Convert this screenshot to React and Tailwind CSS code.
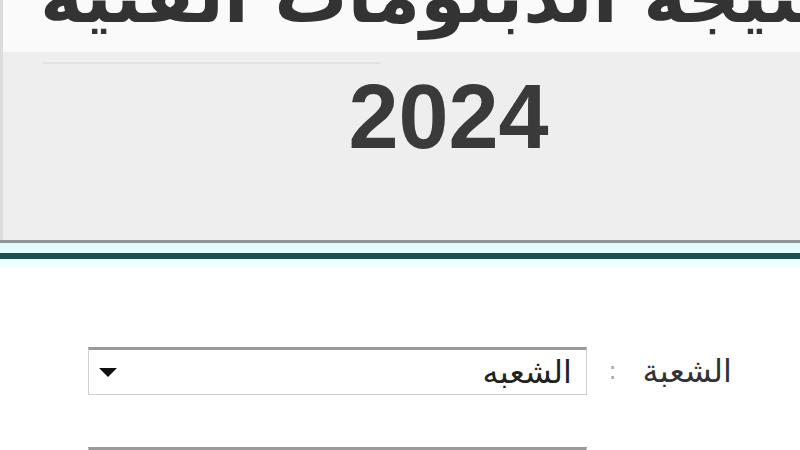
export default function App() {
  return (
    <div className="w-[800px] h-[450px] overflow-hidden bg-white font-['DejaVu_Sans',sans-serif]">
      {/* رأس الصفحة */}
      <header className="h-[240px] bg-[#eeeeee] border-l-[3px] border-[#dcdcdc] flex flex-col overflow-hidden">
        <div className="h-[52px] bg-[#fafafa] relative overflow-visible">
          <div
            dir="rtl"
            className="absolute left-[37px] bottom-[19px] whitespace-nowrap text-[#333] font-bold text-[73px] leading-none"
          >
            نتيجة الدبلومات الفنية
          </div>
        </div>
        <div className="h-[2px] bg-[#e2e2e2] ml-[40px] mr-[420px] mt-[10px]" />
        <div className="flex justify-center pl-[94px] mt-[8px]">
          <span className="font-['Liberation_Sans',sans-serif] font-bold text-[90px] leading-none text-[#3a3a3a]">
            2024
          </span>
        </div>
      </header>

      {/* الخط الفاصل */}
      <div className="h-[3px] bg-[#8c9696]" />
      <div className="h-[10px] bg-[#e2fbfb]" />
      <div className="h-[6px] bg-[#1e4d53]" />
      <div className="h-[8px] bg-[#eefdfd]" />

      {/* النموذج */}
      <div dir="rtl" className="pt-[80px] flex flex-col gap-[52px]">
        <div className="flex items-center">
          <label className="w-[213px] pr-[68px] flex items-center gap-[26px] text-[32px] text-[#333]">
            <span>الشعبة</span>
            <span className="text-[#aaa] text-[24px]">:</span>
          </label>
          <div className="w-[499px] h-[48px] border border-[#cfcfcf] border-t-[3px] border-t-[#9a9a9a] bg-white flex items-center justify-between pr-[14px] pl-[10px]">
            <span className="text-[32px] text-[#222] leading-none">الشعبه</span>
            <svg width="18" height="9" viewBox="0 0 18 9">
              <path d="M0 0 H18 L9 9 Z" fill="#111" />
            </svg>
          </div>
        </div>
        <div className="flex items-center">
          <div className="w-[213px]" />
          <div className="w-[499px] h-[48px] border border-[#cfcfcf] border-t-[3px] border-t-[#9a9a9a] bg-white" />
        </div>
      </div>
    </div>
  );
}
